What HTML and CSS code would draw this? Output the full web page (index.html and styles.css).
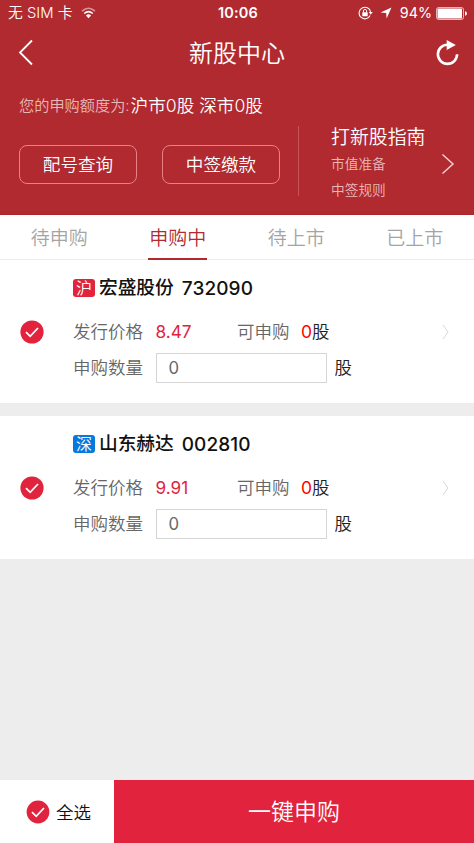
FILE: index.html
```html
<!DOCTYPE html>
<html lang="zh-CN">
<head>
<meta charset="utf-8">
<title>新股中心</title>
<link rel="stylesheet" href="styles.css">
</head>
<body>
<div class="app">
  <header class="header">
    <div class="status">
      <div class="carrier"><span class="carrier-name">无 SIM 卡</span>
        <svg class="wifi" width="15" height="12" viewBox="0 0 15 12"><g fill="none" stroke="#fff" stroke-width="1.5"><path d="M1 4.1Q7.5-1.6 14 4.1" opacity=".5"/><path d="M3.2 6.5Q7.5 2.7 11.8 6.5"/></g><path d="M4.9 8.5Q7.5 6.2 10.1 8.5L7.5 11.2Z" fill="#fff"/></svg>
      </div>
      <div class="time">10:06</div>
      <div class="indicators">
        <svg class="lock" width="15" height="14" viewBox="0 0 15 14"><path d="M12.1 9.6A5.8 5.8 0 1 1 12.6 6" fill="none" stroke="#fff" stroke-width="1.1"/><path d="M10.7 6h4.1l-2.1 2.7Z" fill="#fff"/><rect x="4.3" y="6.2" width="5.4" height="4" rx=".5" fill="#fff"/><path d="M5.4 6.5V5a1.6 1.6 0 0 1 3.2 0v1.5" fill="none" stroke="#fff"/></svg>
        <svg class="arrow" width="12" height="12" viewBox="0 0 12 12"><path d="M11.5.5 6.6 11.5 6.2 5.9.5 5.5Z" fill="#fff"/></svg>
        <span class="percent">94%</span>
        <svg class="battery" width="31" height="13" viewBox="0 0 31 13"><rect x=".5" y=".5" width="27" height="12" rx="2" fill="none" stroke="#fff" stroke-opacity=".65"/><rect x="1.5" y="1.5" width="24.5" height="10" rx=".6" fill="#fff"/><path d="M29 4.2q2 .5 2 2.3t-2 2.3Z" fill="#fff"/></svg>
      </div>
    </div>
    <nav class="nav">
      <svg class="back" width="16" height="28" viewBox="0 0 16 28"><path d="M14 1.5 2 13.5 14 25.5" fill="none" stroke="#fff" stroke-width="1.8"/></svg>
      <h1 class="title">新股中心</h1>
      <svg class="refresh" width="24" height="26" viewBox="0 0 24 26"><path d="M13 4.7H11.5A9.6 9.6 0 1 0 21.1 14.3" fill="none" stroke="#fff" stroke-width="2.6"/><path d="M10.7 0 19.8 5 10.7 10Z" fill="#fff"/></svg>
    </nav>
    <section class="hero">
      <div class="account">
        <p class="quota"><span class="quota-label">您的申购额度为:</span><span>沪市0股 深市0股</span></p>
        <div class="actions"><button class="action">配号查询</button><button class="action">中签缴款</button></div>
      </div>
      <a class="guide">
        <span class="guide-text"><span class="guide-title">打新股指南</span><span>市值准备</span><span>中签规则</span></span>
        <svg class="guide-chevron" width="14" height="22" viewBox="0 0 14 22"><path d="M1.5 1.5 12 11 1.5 20.5" fill="none" stroke="#f3cfcf" stroke-width="1.5"/></svg>
      </a>
    </section>
  </header>
  <div class="tabs">
    <div class="tab"><span>待申购</span></div>
    <div class="tab active"><span>申购中</span></div>
    <div class="tab"><span>待上市</span></div>
    <div class="tab"><span>已上市</span></div>
  </div>
  <main class="list">
    <article class="card">
      <svg class="check" width="24" height="24" viewBox="0 0 24 24"><circle cx="12" cy="12" r="11.6" fill="#e1233d"/><path d="M6 12.2 10.2 16.3 18 8" fill="none" stroke="#fff" stroke-width="1.8"/></svg>
      <div class="detail">
        <h2 class="stock"><span class="market shanghai">沪</span><span class="name">宏盛股份</span><span class="code">732090</span></h2>
        <div class="row"><span class="label">发行价格</span><span class="price">8.47</span><span class="available">可申购</span><span class="zero">0</span><span class="unit">股</span></div>
        <div class="row quantity"><span class="label">申购数量</span><span class="input">0</span><span class="unit">股</span></div>
      </div>
      <svg class="chevron" width="8" height="16" viewBox="0 0 8 16"><path d="M1 1 6 8 1 15" fill="none" stroke="#d8d8d8"/></svg>
    </article>
    <article class="card">
      <svg class="check" width="24" height="24" viewBox="0 0 24 24"><circle cx="12" cy="12" r="11.6" fill="#e1233d"/><path d="M6 12.2 10.2 16.3 18 8" fill="none" stroke="#fff" stroke-width="1.8"/></svg>
      <div class="detail">
        <h2 class="stock"><span class="market shenzhen">深</span><span class="name">山东赫达</span><span class="code">002810</span></h2>
        <div class="row"><span class="label">发行价格</span><span class="price">9.91</span><span class="available">可申购</span><span class="zero">0</span><span class="unit">股</span></div>
        <div class="row quantity"><span class="label">申购数量</span><span class="input">0</span><span class="unit">股</span></div>
      </div>
      <svg class="chevron" width="8" height="16" viewBox="0 0 8 16"><path d="M1 1 6 8 1 15" fill="none" stroke="#d8d8d8"/></svg>
    </article>
  </main>
  <footer class="footer">
    <div class="select-all">
      <svg class="check" width="24" height="24" viewBox="0 0 24 24"><circle cx="12" cy="12" r="11.4" fill="#e1233d"/><path d="M6 12.2 10.2 16.3 18 8" fill="none" stroke="#fff" stroke-width="1.8"/></svg>
      <span>全选</span>
    </div>
    <button class="submit">一键申购</button>
  </footer>
</div>
</body>
</html>
```
FILE: styles.css
```css
* { box-sizing: border-box; margin: 0; padding: 0; }
body { font-family: Inter, "Noto Sans CJK SC", sans-serif; font-weight: 350; background: #ededed; }
svg { display: block; flex: none; }
button { font: inherit; color: inherit; border: 0; background: none; }
.app { height: 843px; display: flex; flex-direction: column; overflow: hidden; white-space: nowrap; }
.header { height: 215px; background: #b12a2f; color: #fff; flex: none; border-bottom: 1px solid #a8282d; }
.status { height: 26px; display: grid; grid-template-columns: 1fr auto 1fr; align-items: center; padding: 0 7px 0 8px; font-size: 15px; line-height: 26px; }
.carrier { display: flex; align-items: center; gap: 9px; }
.carrier-name { font-size: 14.8px; }
.time { font-weight: 600; font-size: 14.5px; letter-spacing: .2px; margin-left: 1px; }
.indicators { display: flex; align-items: center; justify-content: flex-end; }
.lock { margin-right: -1px; }
.arrow { margin: 0 8px; }
.percent { font-size: 14.3px; font-weight: 400; margin-right: 4px; }
.nav { height: 54px; display: flex; align-items: center; justify-content: space-between; padding: 0 14px 0 18px; }
.title { font-size: 24px; font-weight: 350; line-height: 52px; padding: 2px 0 0 4px; }
.hero { height: 134px; display: flex; }
.account { width: 298px; padding: 10px 0 0 19px; }
.quota { height: 32px; line-height: 32px; font-size: 17.6px; display: flex; }
.quota-label { font-size: 15.2px; color: #e9b9ba; margin-right: 1px; }
.actions { display: flex; gap: 25px; margin-top: 23px; }
.action { width: 118px; height: 39px; border: 1px solid #e98085; border-radius: 8px; font-size: 17.6px; line-height: 36px; }
.guide { flex: 1; height: 70px; margin-top: 46px; border-left: 1px solid #c95257; padding: 0 19px 0 32px; display: flex; justify-content: space-between; align-items: center; font-size: 13.7px; color: #e9b9ba; }
.guide-text { display: flex; flex-direction: column; line-height: 26px; padding-top: 6px; }
.guide-title { font-size: 18.9px; color: #fff; }
.guide-chevron { margin-top: 6px; }
.tabs { height: 45px; background: #fff; display: flex; justify-content: space-around; flex: none; border-bottom: 1px solid #ececec; }
.tab { width: 59px; text-align: center; font-size: 19px; line-height: 48px; height: 45px; color: #a4a4a4; display: flex; justify-content: center; }
.active { color: #b12a2f; border-bottom: 2px solid #b12a2f; }
.list { flex: 1; }
.card { height: 143px; display: flex; align-items: center; background: #fff; padding: 0 24px 0 20px; margin-bottom: 13px; }
.detail { flex: 1; margin-left: 29px; align-self: flex-start; padding-top: 14px; }
.stock { display: flex; align-items: center; height: 28px; font-size: 18.7px; font-weight: 500; color: #111; }
.market { width: 22px; height: 18px; border-radius: 3px; color: #fff; font-size: 16px; line-height: 18px; font-weight: 350; text-align: center; }
.shanghai { background: #e1233d; }
.shenzhen { background: #0879dc; }
.name { margin-left: 4px; line-height: 28px; }
.code { margin-left: 8px; font-size: 19px; letter-spacing: .1px; }
.row { height: 29px; line-height: 29px; margin-top: 15px; display: flex; align-items: center; font-size: 17.5px; color: #666; }
.label { width: 82.5px; }
.price { width: 81.5px; color: #e1233d; font-size: 17.2px; font-weight: 400; }
.available { width: 64px; }
.zero { color: #f00; font-weight: 400; width: 11px; }
.unit { color: #222; }
.quantity { margin-top: 7px; }
.input { width: 171px; height: 30px; border: 1px solid #d5d5d5; padding-left: 12px; line-height: 28px; margin-right: 8px; font-size: 16.7px; font-weight: 400; }
.footer { height: 63px; flex: none; display: flex; }
.select-all { width: 114px; background: #fff; display: flex; align-items: center; gap: 6px; padding-left: 26px; font-size: 17.5px; color: #111; }
.submit { flex: 1; background: #e1233d; color: #fff; font-size: 23px; line-height: 62px; }
```
